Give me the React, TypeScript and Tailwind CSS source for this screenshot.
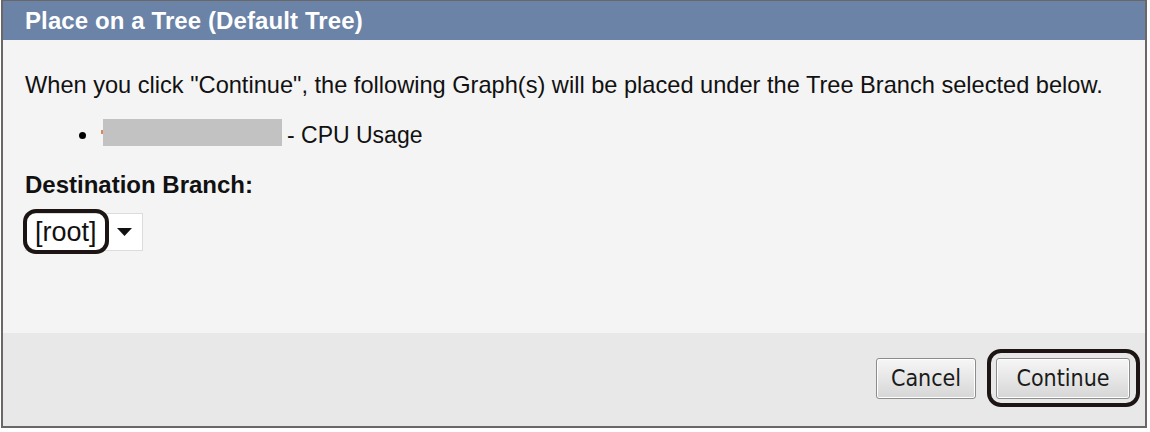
export default function App() {
  const btnFont = { fontFamily: '"DejaVu Sans Condensed", "Liberation Sans Narrow", sans-serif' }
  return (
    <div className="w-[1150px] h-[432px] bg-white pl-px" style={{ fontFamily: '"Liberation Sans", Arial, sans-serif' }}>
      <div className="w-[1146px] h-[428px] border-2 border-t border-[#6b6767] flex flex-col bg-[#f4f4f4]">
        {/* Header */}
        <div className="h-[39px] bg-[#6a83a6] flex items-center pl-[22px]">
          <h1 className="text-white font-bold text-[24px] leading-none tracking-[0.1px]">Place on a Tree (Default Tree)</h1>
        </div>

        {/* Body */}
        <div className="flex-1 px-[22px] pt-[31px] text-[23.6px] text-[#111]">
          <p className="leading-[28px]">
            When you click "Continue", the following Graph(s) will be placed under the Tree Branch selected below.
          </p>
          <ul className="mt-[19px] pl-[54px]">
            <li className="flex items-center h-[28px]">
              <span className="w-[7px] h-[7px] rounded-full bg-black mr-[15px] mt-[6px]" />
              <span className="w-[2px] h-[4px] bg-[#d98a5a]" />
              <span className="w-[179px] h-[27px] bg-[#c2c2c2]" />
              <span className="ml-[5px] text-[23px] mt-[6px]">- CPU Usage</span>
            </li>
          </ul>
          <p className="mt-[25px] font-bold leading-[28px] text-[24px]">Destination Branch:</p>
          <div className="mt-[14px] relative w-[118px] h-[38px] bg-white border border-[#dcdcdc] flex items-center">
            <span className="ml-[9px] text-[27px] leading-none">[root]</span>
            <svg className="ml-[20px]" width="15" height="8" viewBox="0 0 15 8">
              <polygon points="0,0 15,0 7.5,8" fill="#111" />
            </svg>
            <span className="absolute left-[-3px] top-[-5px] w-[86px] h-[45px] rounded-[13px] border-[4px] border-[#1c1514]" />
          </div>
        </div>

        {/* Footer */}
        <div className="h-[93px] bg-[#e8e8e8] flex justify-end items-start pt-[25px] pr-[15px] gap-[20px]">
          <button className="h-[41px] w-[100px] rounded-[3px] border border-[#8c8c8c] bg-gradient-to-b from-[#f6f6f6] via-[#e6e6e6] to-[#d6d6d6] shadow-[inset_0_0_0_1px_#fff] text-[23px] text-[#1a1a1a]" style={btnFont}>
            Cancel
          </button>
          <div className="relative">
            <button className="h-[41px] w-[134px] rounded-[3px] border border-[#8c8c8c] bg-gradient-to-b from-[#f6f6f6] via-[#e6e6e6] to-[#d6d6d6] shadow-[inset_0_0_0_1px_#fff] text-[23px] text-[#1a1a1a]" style={btnFont}>
              Continue
            </button>
            <span className="absolute left-[-9px] top-[-9px] w-[153px] h-[58px] rounded-[14px] border-[4px] border-[#1c1514]" />
          </div>
        </div>
      </div>
    </div>
  )
}
